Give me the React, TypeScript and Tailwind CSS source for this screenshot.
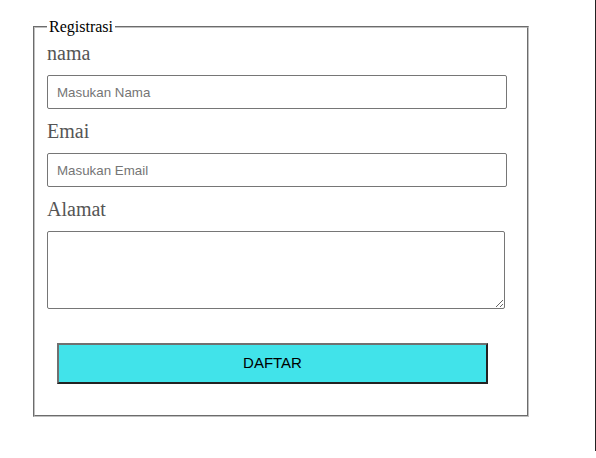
export default function App() {
  return (
    <div className="w-[596px] h-[458px] bg-white">
      <div className="w-[596px] h-[451px] border-r border-[#222] pl-[33px] pt-[15px]">
        <form onSubmit={(e) => e.preventDefault()}>
          <fieldset className="w-[496px] border-2 [border-style:groove] border-[#c0c0c0] px-3 pt-[2px] pb-[31px] flex flex-col items-start">
            <legend className="px-[2px] text-[16px] text-black font-['Liberation_Serif',serif]">Registrasi</legend>

            <label className="text-[20px] leading-[24px] text-[#555] font-['Liberation_Serif',serif] mb-[10px]">nama</label>
            <input
              type="text"
              placeholder="Masukan Nama"
              className="w-[460px] h-[34px] border border-[#767676] rounded-[2px] pl-[9px] text-[13.33px] font-['Liberation_Sans',sans-serif] placeholder:text-[#757575] mb-[10px]"
            />

            <label className="text-[20px] leading-[24px] text-[#555] font-['Liberation_Serif',serif] mb-[10px]">Emai</label>
            <input
              type="text"
              placeholder="Masukan Email"
              className="w-[460px] h-[34px] border border-[#767676] rounded-[2px] pl-[9px] text-[13.33px] font-['Liberation_Sans',sans-serif] placeholder:text-[#757575] mb-[10px]"
            />

            <label className="text-[20px] leading-[24px] text-[#555] font-['Liberation_Serif',serif] mb-[10px]">Alamat</label>
            <textarea className="w-[458px] h-[78px] border border-[#767676] rounded-[2px]" />

            <button
              type="submit"
              className="mt-[34px] ml-[10px] w-[431px] h-[41px] bg-[#41e3ea] border-2 border-t-[#707070] border-l-[#707070] border-b-[#222] border-r-[#222] text-[15px] text-black font-['Liberation_Sans',sans-serif]"
            >
              DAFTAR
            </button>
          </fieldset>
        </form>
      </div>
    </div>
  );
}
